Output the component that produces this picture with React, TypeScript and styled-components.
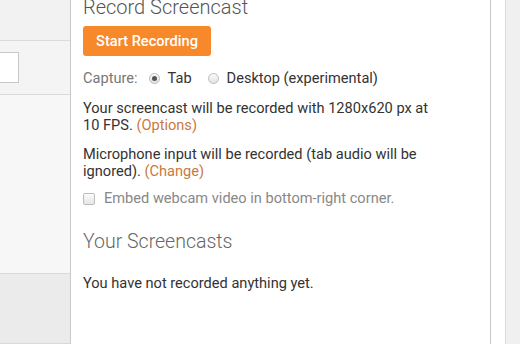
import React from 'react';
import styled, { createGlobalStyle } from 'styled-components';

const Global = createGlobalStyle`
  html, body { margin: 0; padding: 0; }
  *, *::before, *::after { box-sizing: border-box; }
  body {
    width: 520px;
    height: 344px;
    overflow: hidden;
    background: #f0f0f0;
    font-family: Roboto, "Liberation Sans", Arial, sans-serif;
  }
`;

const Page = styled.div`
  display: flex;
  height: 344px;
`;

const Sidebar = styled.div`
  width: 70px;
  display: flex;
  flex-direction: column;
  flex-shrink: 0;
`;

const SideBlock = styled.div<{ $h?: number; $bg: string }>`
  height: ${(p) => (p.$h ? `${p.$h}px` : 'auto')};
  flex: ${(p) => (p.$h ? '0 0 auto' : '1')};
  background: ${(p) => p.$bg};
  border-bottom: 1px solid #dadada;
  display: flex;
  align-items: center;
`;

const SideInput = styled.div`
  width: 28px;
  height: 31px;
  margin-left: -9px;
  background: #fff;
  border: 1px solid #c8c8c8;
`;

const Panel = styled.main`
  width: 421px;
  flex-shrink: 0;
  background: #fff;
  border-left: 1px solid #c9c9c9;
  border-right: 1px solid #c9c9c9;
  padding: 0 12px;
  overflow: hidden;
`;

const Gutter = styled.div`
  width: 15px;
  background: #fff;
  border-right: 1px solid #dcdcdc;
  flex-shrink: 0;
`;

const Title = styled.h1`
  margin: -7px 0 0;
  font-size: 20px;
  font-weight: 300;
  color: #555;
  line-height: 28px;
  white-space: nowrap;
`;

const Subtitle = styled.h2`
  margin: 22px 0 0;
  font-size: 19.5px;
  font-weight: 300;
  color: #666;
  line-height: 26px;
`;

const RecordButton = styled.button`
  margin-top: 5px;
  height: 30px;
  width: 128px;
  border: none;
  border-radius: 3px;
  background: #f8892a;
  color: #fff;
  font-family: inherit;
  font-size: 14.6px;
  font-weight: 500;
  padding: 0;
`;

const CaptureRow = styled.div`
  display: flex;
  align-items: center;
  margin-top: 13px;
  height: 18px;
  font-size: 14.6px;
  color: #777;
`;

const Option = styled.label`
  display: flex;
  align-items: center;
  color: #333;
  margin-left: 11px;
  & + & {
    margin-left: 16px;
  }
`;

const Radio = styled.span<{ $checked?: boolean }>`
  width: 11px;
  height: 11px;
  border-radius: 50%;
  border: 1px solid #bbb;
  background: linear-gradient(#fafafa, #e2e2e2);
  margin-right: 8px;
  display: flex;
  align-items: center;
  justify-content: center;
  &::after {
    content: '';
    width: 5px;
    height: 5px;
    border-radius: 50%;
    background: #555;
    display: ${(p) => (p.$checked ? 'block' : 'none')};
  }
`;

const Text = styled.p<{ $gap?: number }>`
  margin: ${(p) => p.$gap ?? 12}px 0 0;
  font-size: 14.6px;
  line-height: 17px;
  color: #333;
`;

const Link = styled.a`
  color: #c97a3f;
  text-decoration: none;
`;

const CheckRow = styled.label`
  display: flex;
  align-items: center;
  margin-top: 10px;
  font-size: 14.6px;
  line-height: 17px;
  color: #888;
`;

const Checkbox = styled.span`
  width: 12px;
  height: 12px;
  border: 1px solid #bbb;
  border-radius: 2px;
  background: linear-gradient(#fbfbfb, #e6e6e6);
  margin-right: 9px;
`;

export default function App() {
  return (
    <>
      <Global />
      <Page>
        <Sidebar>
          <SideBlock $h={41} $bg="#f2f2f2" />
          <SideBlock $h={54} $bg="#f4f4f4">
            <SideInput />
          </SideBlock>
          <SideBlock $h={179} $bg="#f7f7f7" />
          <SideBlock $bg="#ebebeb" />
        </Sidebar>
        <Panel>
          <Title>Record Screencast</Title>
          <RecordButton>Start Recording</RecordButton>
          <CaptureRow>
            Capture:
            <Option>
              <Radio $checked />
              Tab
            </Option>
            <Option>
              <Radio />
              Desktop (experimental)
            </Option>
          </CaptureRow>
          <Text $gap={13}>
            Your screencast will be recorded with 1280x620 px at
            <br />
            10 FPS. <Link>(Options)</Link>
          </Text>
          <Text>
            Microphone input will be recorded (tab audio will be
            <br />
            ignored). <Link>(Change)</Link>
          </Text>
          <CheckRow>
            <Checkbox />
            Embed webcam video in bottom-right corner.
          </CheckRow>
          <Subtitle>Your Screencasts</Subtitle>
          <Text $gap={20}>You have not recorded anything yet.</Text>
        </Panel>
        <Gutter />
      </Page>
    </>
  );
}
